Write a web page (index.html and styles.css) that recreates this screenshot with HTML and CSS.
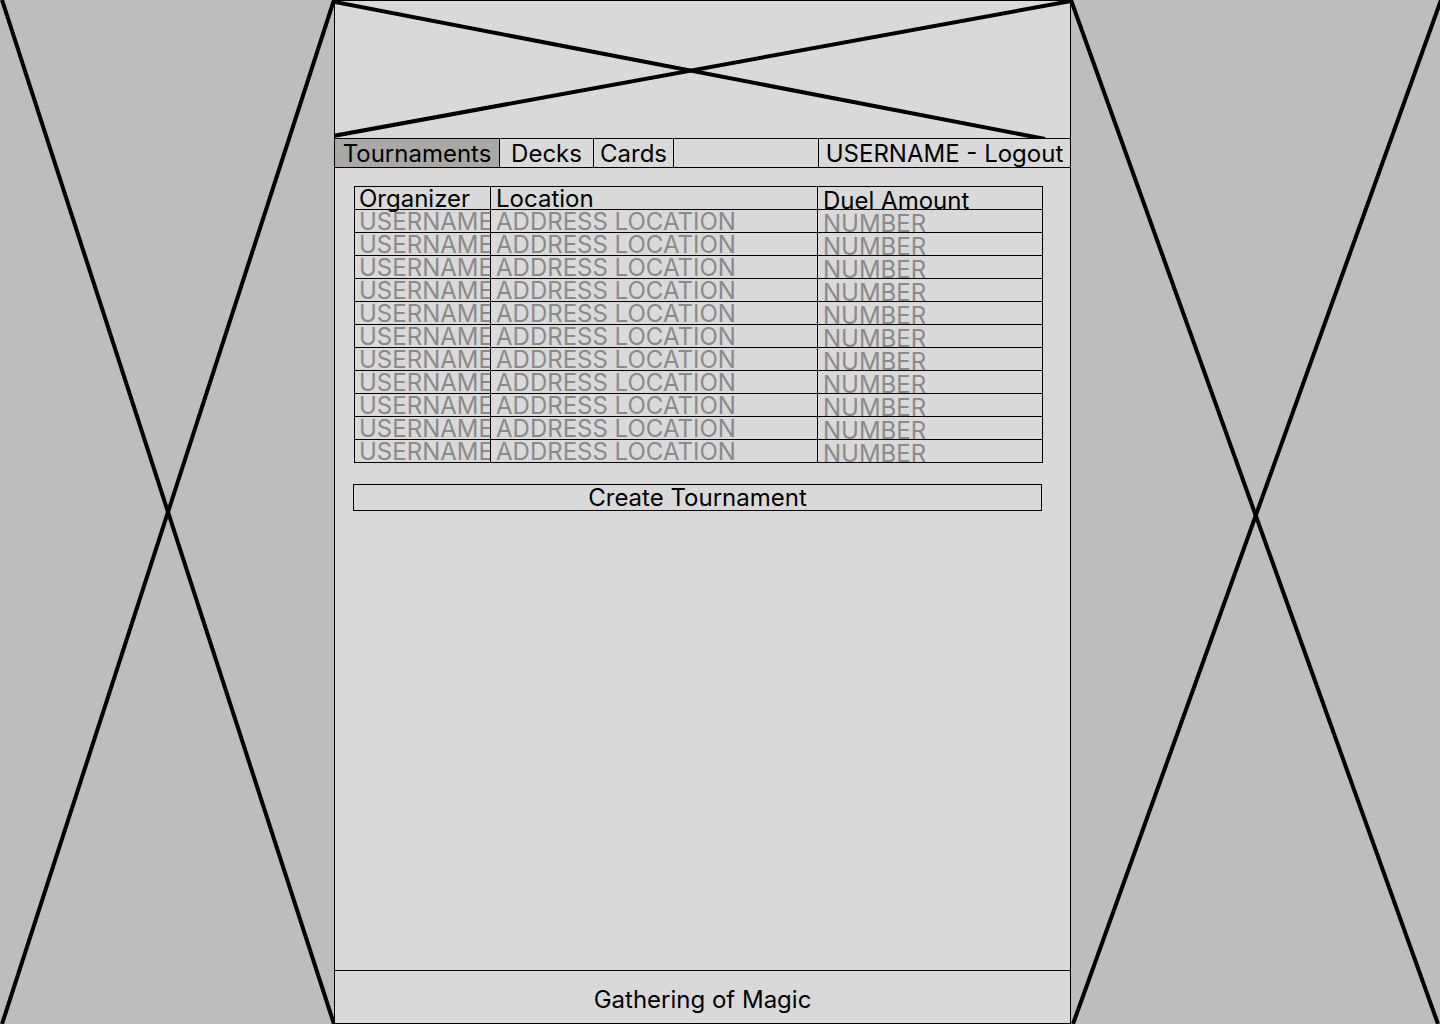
FILE: index.html
```html
<!DOCTYPE html>
<html>
<head>
    <link rel="stylesheet" href="styles.css">
</head>
<body>
    <div class="layout">
        <div class="placeholder">
            <svg viewBox="0 0 334 1024" preserveAspectRatio="none">
                <line x1="2" y1="0" x2="334" y2="1024" />
                <line x1="334" y1="0" x2="2" y2="1024" />
            </svg>
        </div>

        <div class="page">
            <div class="banner">
                <svg viewBox="0 0 735 137" preserveAspectRatio="none">
                    <line x1="0" y1="1" x2="710" y2="138" />
                    <line x1="736" y1="0" x2="-2" y2="135" />
                </svg>
            </div>

            <nav class="menu">
                <a class="menu-item active tournaments">Tournaments</a>
                <a class="menu-item decks">Decks</a>
                <a class="menu-item cards">Cards</a>
                <span class="menu-space"></span>
                <a class="menu-item user">USERNAME - Logout</a>
            </nav>

            <main class="content">
                <table class="tournaments-table">
                    <colgroup>
                        <col class="col-organizer">
                        <col class="col-location">
                        <col class="col-duels">
                    </colgroup>
                    <thead>
                        <tr>
                            <th>Organizer</th>
                            <th>Location</th>
                            <th class="num">Duel Amount</th>
                        </tr>
                    </thead>
                    <tbody id="rows"></tbody>
                </table>

                <button class="create-btn">Create Tournament</button>
            </main>

            <footer class="footer">Gathering of Magic</footer>
        </div>

        <div class="placeholder">
            <svg viewBox="0 0 369 1024" preserveAspectRatio="none">
                <line x1="0" y1="0" x2="367" y2="1024" />
                <line x1="370" y1="0" x2="2" y2="1024" />
            </svg>
        </div>
    </div>

    <script>
        const rows = document.getElementById("rows");
        for (let i = 0; i < 11; i++) {
            const tr = document.createElement("tr");
            tr.innerHTML = "<td>USERNAME</td><td>ADDRESS LOCATION</td><td class=\"num\">NUMBER</td>";
            rows.appendChild(tr);
        }
    </script>
</body>
</html>
```

FILE: styles.css
```css
/* Wireframe: lista de torneios */
body {
    margin: 0;
    font-family: Inter, "Noto Sans", sans-serif;
    font-size: 24px;
    color: #000;
    background-color: #bdbdbd;
}

.layout {
    display: grid;
    grid-template-columns: 334px 737px 1fr;
    height: 1024px;
}

.placeholder svg,
.banner svg {
    display: block;
    width: 100%;
    height: 100%;
}

.placeholder line,
.banner line {
    stroke: #000;
    stroke-width: 4;
    vector-effect: non-scaling-stroke;
}

.page {
    display: flex;
    flex-direction: column;
    background-color: #d9d9d9;
    border: 1px solid #000;
    box-sizing: border-box;
    height: 1024px;
    overflow: hidden;
}

.banner {
    height: 137px;
}

/* Menu */
.menu {
    display: flex;
    height: 28px;
    border-top: 1px solid #000;
    border-bottom: 1px solid #000;
}

.menu-item {
    text-align: center;
    white-space: nowrap;
    line-height: 30px;
    box-sizing: border-box;
    cursor: pointer;
}

.tournaments { width: 165px; border-right: 1px solid #000; }
.decks { width: 94px; border-right: 1px solid #000; }
.cards { width: 80px; border-right: 1px solid #000; }
.user { width: 252px; border-left: 1px solid #000; }

.menu-item.active {
    background-color: #aaa7a7;
}

.menu-space {
    flex: 1;
}

/* Tabela */
.content {
    flex: 1;
    padding: 18px 0 0 19px;
}

.tournaments-table {
    border-collapse: collapse;
    table-layout: fixed;
    width: 688px;
}

.col-organizer { width: 136px; }
.col-location { width: 327px; }
.col-duels { width: 225px; }

.tournaments-table th,
.tournaments-table td {
    border: 1px solid #000;
    height: 20px;
    padding: 2px 0 0 4px;
    line-height: 20px;
    font-weight: normal;
    text-align: left;
    white-space: nowrap;
    overflow-x: clip;
    overflow-y: visible;
}

.tournaments-table th:nth-child(2),
.tournaments-table td:nth-child(2),
.tournaments-table .num {
    padding-left: 5px;
}

.tournaments-table td {
    color: #8a8a8a;
}

/* coluna de duelos fica um pouco mais baixa */
.tournaments-table .num {
    padding-top: 5px;
    height: 17px;
    line-height: 17px;
}

.create-btn {
    display: block;
    width: 689px;
    height: 27px;
    margin: 21px 0 0 -1px;
    padding: 0;
    font-family: inherit;
    font-size: 24px;
    line-height: 24px;
    color: #000;
    background-color: #d9d9d9;
    border: 1px solid #000;
    cursor: pointer;
}

.footer {
    height: 47px;
    padding-top: 5px;
    border-top: 1px solid #000;
    display: flex;
    align-items: center;
    justify-content: center;
}
```
